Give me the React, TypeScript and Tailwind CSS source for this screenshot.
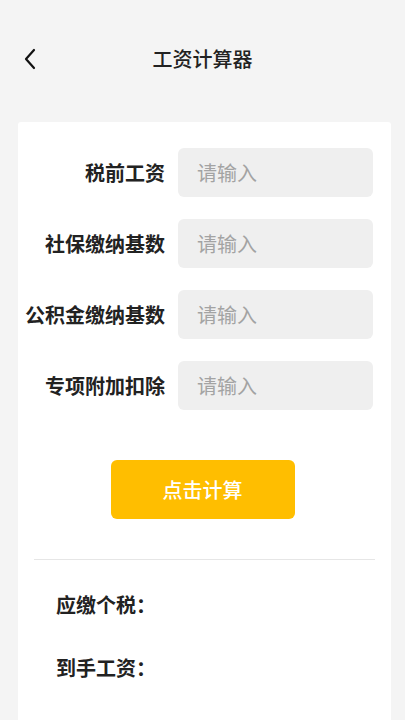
import { useState } from "react";

const fields = ["税前工资", "社保缴纳基数", "公积金缴纳基数", "专项附加扣除"];

const SalaryCalculator = () => {
  const [values, setValues] = useState<string[]>(["", "", "", ""]);

  const handleChange = (index: number, value: string) => {
    const next = [...values];
    next[index] = value;
    setValues(next);
  };

  return (
    <div
      className="w-[405px] h-[720px] overflow-hidden bg-[#f4f4f4] text-[#222]"
      style={{ fontFamily: '"Noto Sans CJK SC", "Noto Sans", sans-serif' }}
    >
      {/* header */}
      <div className="relative flex items-center justify-center h-[40px] mt-[39px]">
        <button className="absolute left-[22px] top-[8px] w-[16px] h-[24px] flex items-center justify-center">
          <svg width="14" height="22" viewBox="0 0 14 22" fill="none">
            <path
              d="M11 2L3 11L11 20"
              stroke="#111"
              strokeWidth="2.2"
              strokeLinecap="round"
              strokeLinejoin="round"
            />
          </svg>
        </button>
        <span className="text-[20px] leading-[40px] font-medium">工资计算器</span>
      </div>

      {/* card */}
      <div className="ml-[18px] mr-[14px] mt-[43px] bg-white rounded-t-[3px] pt-[26px] h-[620px]">
        <div className="flex flex-col gap-[22px]">
          {fields.map((label, index) => (
            <div key={index} className="flex items-center">
              <label className="w-[147px] text-right text-[20px] font-semibold leading-none">
                {label}
              </label>
              <input
                value={values[index]}
                onChange={(e) => handleChange(index, e.target.value)}
                placeholder="请输入"
                className="ml-[13px] w-[195px] h-[49px] rounded-[6px] bg-[#efefef] px-[19px] text-[20px] outline-none placeholder:text-[#a3a3a3]"
              />
            </div>
          ))}
        </div>

        <div className="flex justify-center pr-[4px] mt-[50px]">
          <button className="w-[184px] h-[59px] rounded-[6px] bg-[#ffbe00] text-white text-[20px] font-medium">
            点击计算
          </button>
        </div>

        <div className="mx-[16px] mt-[40px] border-t border-[#e6e6e6]" />

        <div className="pl-[38px] pt-[31px] flex flex-col gap-[35px]">
          <div className="text-[20px] font-semibold leading-[28px]">应缴个税：</div>
          <div className="text-[20px] font-semibold leading-[28px]">到手工资：</div>
        </div>
      </div>
    </div>
  );
};

export default function App() {
  return <SalaryCalculator />;
}
